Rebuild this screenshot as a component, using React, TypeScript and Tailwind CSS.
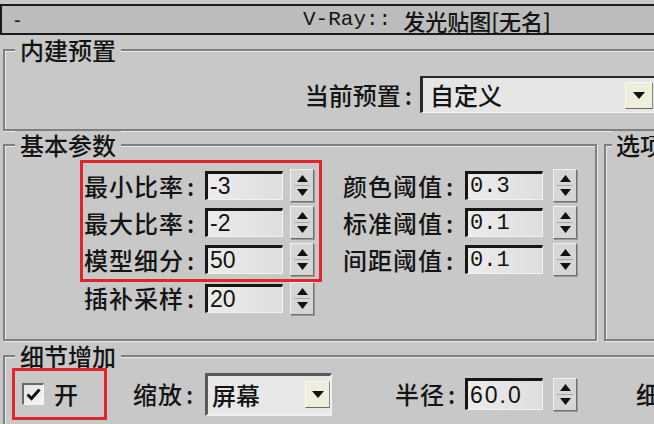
import React from "react";

const CJK = "[font-family:'Noto_Sans_CJK_SC','Noto_Sans',sans-serif]";

function Up() {
  return (
    <svg width="11" height="7" viewBox="0 0 11 7">
      <path d="M0 7 L5.5 0 L11 7 Z" fill="#111" />
    </svg>
  );
}
function Down() {
  return (
    <svg width="11" height="7" viewBox="0 0 11 7">
      <path d="M0 0 L5.5 7 L11 0 Z" fill="#111" />
    </svg>
  );
}

function Spinner({ className = "" }: { className?: string }) {
  return (
    <div
      className={`shrink-0 w-[24px] h-[33px] flex flex-col bg-[#d6d6d6] border border-t-[#f2f2f2] border-l-[#f2f2f2] border-r-[#707070] border-b-[#707070] shadow-[1px_1px_0_#9a9a9a] ${className}`}
    >
      <div className="flex-1 flex items-center justify-center pt-[2px]">
        <Up />
      </div>
      <div className="h-px bg-[#a8a8a8] mx-[3px]" />
      <div className="flex-1 flex items-center justify-center pb-[2px]">
        <Down />
      </div>
    </div>
  );
}

function Field({
  value,
  mono = false,
  h = "h-[29px]",
  extra = "",
}: {
  value: string;
  mono?: boolean;
  h?: string;
  extra?: string;
}) {
  return (
    <div
      className={`shrink-0 w-[78px] ${h} flex items-center pl-[2px] bg-gradient-to-r from-[#ececec] to-[#dedede] border-t-[3px] border-l-[3px] border-t-[#161616] border-l-[#161616] border-r border-b border-r-[#f2f2f2] border-b-[#f2f2f2] text-[#111] leading-none ${
        mono
          ? "[font-family:'Liberation_Mono',monospace] text-[22px]"
          : "[font-family:'Liberation_Sans',Arial,sans-serif] text-[23px]"
      } ${extra}`}
    >
      {value}
    </div>
  );
}

function Label({ text, w }: { text: string; w: string }) {
  return (
    <div className={`${w} shrink-0 flex items-center text-[24px] leading-none tracking-[1px] text-[#141414] whitespace-nowrap`}>
      <span>{text}</span>
      <span className="ml-[3px] tracking-normal">:</span>
    </div>
  );
}

function Row({
  label,
  value,
  h = "h-[37px]",
}: {
  label: string;
  value: string;
  h?: string;
}) {
  return (
    <div className={`${h} flex items-center`}>
      <div className="pl-[1px]">
        <Label text={label} w="w-[121px]" />
      </div>
      <Field value={value} />
      <Spinner className="ml-[7px]" />
    </div>
  );
}

function Row2({ label, value }: { label: string; value: string }) {
  return (
    <div className="h-[37px] flex items-center">
      <Label text={label} w="w-[122px]" />
      <Field value={value} mono />
      <Spinner className="ml-[10px]" />
    </div>
  );
}

function Arrow({ w, h }: { w: string; h: string }) {
  return (
    <div
      className={`${w} ${h} shrink-0 flex items-center justify-center bg-[#efeddc] border border-t-[#fbfaf0] border-l-[#fbfaf0] border-r-[#8a8a80] border-b-[#6a6a60]`}
    >
      <svg width="12" height="7" viewBox="0 0 12 7">
        <path d="M0 0 L6 7 L12 0 Z" fill="#111" />
      </svg>
    </div>
  );
}

const fieldsetCls =
  "shrink-0 border-2 border-[#808080] shadow-[inset_1px_1px_0_#ececec,1px_1px_0_#ececec]";
const legendCls =
  "ml-[10px] px-[5px] h-[28px] leading-[28px] text-[24px] bg-[#c8c8c8] text-[#141414] whitespace-nowrap";

export default function App() {
  return (
    <div className={`w-[654px] h-[424px] overflow-hidden bg-[#c8c8c8] text-[#141414] font-medium ${CJK}`}>
      {/* title bar */}
      <div className="pt-[4px]">
        <div className="w-[700px] h-[31px] border-2 border-[#1a1a1a] bg-[#bcbcbc] flex items-center whitespace-nowrap">
          <span className="ml-[12px] w-[20px] text-[20px] leading-none [font-family:'Liberation_Sans',sans-serif]">
            -
          </span>
          <span className="ml-[269px] text-[21px] leading-none [font-family:'Liberation_Mono',monospace]">
            V-Ray::
          </span>
          <span className="ml-[12px] text-[22px] leading-none">发光贴图[无名]</span>
        </div>
      </div>

      {/* 内建预置 */}
      <fieldset className={`ml-[3px] mt-[1px] w-[700px] h-[95px] ${fieldsetCls}`}>
        <legend className={legendCls}>内建预置</legend>
        <div className="flex items-center mt-[12px]">
          <div className="w-[407px] shrink-0 flex justify-end items-center text-[24px] leading-none">
            <span>当前预置</span>
            <span className="ml-[4px]">:</span>
          </div>
          <div className="ml-[8px] shrink-0 w-[262px] h-[37px] flex items-center bg-[#e6e6e6] border-t-2 border-l-[3px] border-t-[#2a2a2a] border-l-[#2a2a2a] border-b border-b-[#f4f4f4]">
            <span className="pl-[7px] w-[202px] shrink-0 text-[24px] leading-none">自定义</span>
            <Arrow w="w-[28px]" h="h-[27px]" />
          </div>
        </div>
      </fieldset>

      {/* 基本参数 + 选项 */}
      <div className="flex ml-[3px] w-[900px]">
        <fieldset className={`w-[594px] h-[210px] ${fieldsetCls}`}>
          <legend className={legendCls}>基本参数</legend>
          <div className="flex items-start">
            <div className="ml-[75px] mt-[1px] shrink-0">
              <div className="w-[242px] border-[3px] border-[#e0262b] pt-[4px] pb-[1px]">
                <Row label="最小比率" value="-3" />
                <Row label="最大比率" value="-2" />
                <Row label="模型细分" value="50" />
              </div>
              <div className="pl-[3px]">
                <Row label="插补采样" value="20" h="h-[32px]" />
              </div>
            </div>
            <div className="ml-[21px] mt-[8px] shrink-0">
              <Row2 label="颜色阈值" value="0.3" />
              <Row2 label="标准阈值" value="0.1" />
              <Row2 label="间距阈值" value="0.1" />
            </div>
          </div>
        </fieldset>
        <fieldset className={`ml-[7px] w-[200px] h-[210px] ${fieldsetCls}`}>
          <legend className={`${legendCls} !ml-[6px] !px-[4px]`}>选项</legend>
        </fieldset>
      </div>

      {/* 细节增加 */}
      <fieldset className={`ml-[3px] mt-[1px] w-[700px] h-[100px] ${fieldsetCls}`}>
        <legend className={legendCls}>细节增加</legend>
        <div className="flex items-center -mt-[2px]">
          <div className="ml-[7px] shrink-0 w-[95px] h-[52px] border-[3px] border-[#e0262b] flex items-center">
            <div className="ml-[7px] w-[22px] h-[22px] flex items-center justify-center bg-gradient-to-br from-[#e4e4e4] to-[#f6f6f6] border-t-2 border-l-2 border-t-[#6a6a6a] border-l-[#6a6a6a] border-r border-b border-r-[#f4f4f4] border-b-[#f4f4f4]">
              <svg width="15" height="13" viewBox="0 0 15 13">
                <path d="M1.5 6.5 L5.5 10.5 L13.5 1.5" fill="none" stroke="#111" strokeWidth="3" />
              </svg>
            </div>
            <span className="ml-[10px] text-[24px] leading-none">开</span>
          </div>
          <div className="ml-[26px]">
            <Label text="缩放" w="w-[72px]" />
          </div>
          <div className="shrink-0 w-[127px] h-[43px] flex items-center bg-[#e8e8e8] border-t-[3px] border-l-[3px] border-t-[#5a5a5a] border-l-[#5a5a5a] border-r-2 border-b-2 border-r-[#f0f0f0] border-b-[#f0f0f0]">
            <span className="pl-[4px] w-[97px] shrink-0 text-[24px] leading-none">屏幕</span>
            <Arrow w="w-[25px]" h="h-[27px]" />
          </div>
          <div className="ml-[63px]">
            <Label text="半径" w="w-[70px]" />
          </div>
          <Field value="60.0" h="h-[32px]" extra="tracking-[2px]" />
          <Spinner className="ml-[10px]" />
          <span className="ml-[59px] shrink-0 text-[24px] leading-none whitespace-nowrap">细</span>
        </div>
      </fieldset>
    </div>
  );
}
